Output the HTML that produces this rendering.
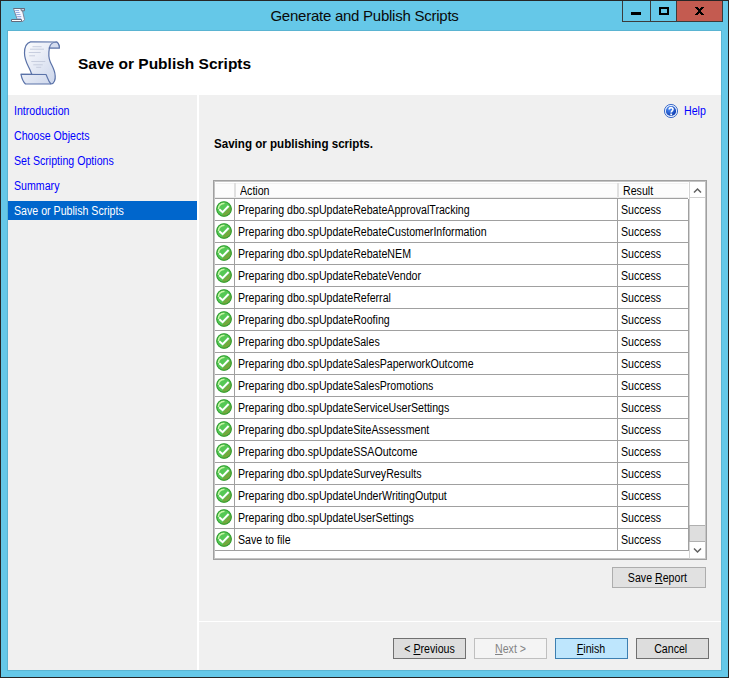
<!DOCTYPE html>
<html><head><meta charset="utf-8"><style>
*{margin:0;padding:0;box-sizing:border-box}
html,body{width:729px;height:678px;overflow:hidden;background:#262626}
body{position:relative;font-family:"Liberation Sans",sans-serif;font-size:12px;color:#000}
.a{position:absolute}
.t{position:absolute;line-height:14px;white-space:nowrap;transform-origin:0 0}
.nv{color:#0000ff}
.rw{left:215px;width:473px;height:22px;border-bottom:1px solid #a0a0a0;background:#fff}
.btn{position:absolute;height:21px;border:1px solid #707070;background:#dddddd;text-align:center;line-height:20px;white-space:nowrap}
.btn span{display:inline-block;transform-origin:50% 50%}
.b1{border-color:#adadad;background:#e1e1e1}
.b2{border-color:#bfbfbf;background:#f4f4f4;color:#838383}
.b3{border-color:#3c7fb1;background:#bee6fd}
u{text-decoration:underline;text-underline-offset:1px}
</style></head><body>
<svg width="0" height="0" style="position:absolute"><defs>
<radialGradient id="cg" cx="0.32" cy="0.3" r="0.75"><stop offset="0" stop-color="#c8f5a8"/><stop offset="0.5" stop-color="#5cc84a"/><stop offset="1" stop-color="#2f9a2f"/></radialGradient>
<clipPath id="cc"><circle cx="8" cy="8" r="7.5"/></clipPath>
<g id="chk"><circle cx="8" cy="8" r="7.5" fill="#55c855"/><path d="M3.5 16.5 L16.5 3.5 L16.5 16.5 Z" fill="#74a83e" clip-path="url(#cc)"/><path d="M2.3 8 C2.5 4.5 5 2.4 8.5 2.2" stroke="#c4f5a4" stroke-width="1.6" fill="none"/><circle cx="8" cy="8" r="7.3" fill="none" stroke="#33a033" stroke-width="1.1"/><path d="M3.3 8.3 L6.6 11.2 L12.6 5" fill="none" stroke="#fff" stroke-width="1.9"/></g>
<linearGradient id="sg" x1="0" y1="0" x2="1" y2="1"><stop offset="0" stop-color="#ffffff"/><stop offset="1" stop-color="#c9d3ea"/></linearGradient>
<radialGradient id="hg" cx="0.35" cy="0.3" r="0.8"><stop offset="0" stop-color="#4f8ff8"/><stop offset="1" stop-color="#0733a8"/></radialGradient>
</defs></svg>
<div class="a" style="left:1px;top:1px;width:727px;height:676px;background:#65c8e8"></div>
<div class="a" style="left:7px;top:30px;width:715px;height:641px;background:#5ab4d2"></div>
<div class="a" style="left:8px;top:31px;width:713px;height:639px;background:#f0f0f0"></div>

<svg class="a" style="left:0;top:0" width="30" height="26" viewBox="0 0 30 26"><path d="M13.5 8.5 L22 8.5 L24.5 19.5 L23 21.5 L17.5 19.8 C16 16 14.5 12 13.5 8.5 Z" fill="#f6f8ff" stroke="#7d8498" stroke-width="1"/><path d="M20.8 8.5 H24.5 V10.8 H21.4 Z" fill="#c9d1e6" stroke="#6a7182" stroke-width="1"/><path d="M13.5 8.5 H24.5" stroke="#646b7c" stroke-width="1"/><path d="M11.5 19.5 H21.5 V21.5 H11.5Z" fill="#ffffff" stroke="#646b7c" stroke-width="1"/><path d="M15.2 10.5H19M15.6 12.5H19.6M16.3 14.5H20.5M17.2 16.5H21.3M17.6 18.3H21.2" stroke="#8ea4de" stroke-width="0.9"/></svg>
<div class="a" style="left:0;top:6px;width:729px;text-align:center;font-size:15px;letter-spacing:-0.25px;color:#0a0a0a;line-height:20px">Generate and Publish Scripts</div>
<div class="a" style="left:622px;top:1px;width:101px;height:21px;background:#65c8e8;border:1px solid #3b3b3b;border-top:none"></div>
<div class="a" style="left:676px;top:1px;width:47px;height:21px;background:#c45b50;border:1px solid #3b3b3b;border-top:none"></div>
<div class="a" style="left:650px;top:1px;width:1px;height:20px;background:#3b3b3b"></div>
<div class="a" style="left:631px;top:12px;width:10px;height:3px;background:#000"></div>
<div class="a" style="left:659px;top:7px;width:10px;height:8px;border:2px solid #000"></div>
<svg class="a" style="left:695px;top:7px" width="9" height="8" viewBox="0 0 9 8" shape-rendering="crispEdges"><path d="M0 0h3v1h-3zM6 0h3v1h-3zM1 1h3v1h-3zM5 1h3v1h-3zM2 2h5v1h-5zM3 3h3v1h-3zM3 4h3v1h-3zM2 5h5v1h-5zM1 6h3v1h-3zM5 6h3v1h-3zM0 7h3v1h-3zM6 7h3v1h-3z" fill="#000"/></svg>

<div class="a" style="left:8px;top:31px;width:713px;height:64px;background:#fff"></div>
<svg class="a" style="left:16px;top:39px" width="48" height="48" viewBox="0 0 48 48">
<path d="M14.5 2.8 C10 4 8.5 9 8.5 14 C8.5 22 12 26 14.5 32 C15 33.5 15.5 34.5 15.7 35 L5 35.3 C5.5 38 7.5 43 9.5 45 L35 45 C38.5 44.5 39.5 40 39.2 37 C39 31 36 27 34.3 23 C33 20 32.5 14 33.4 8.8 L43.3 9 C43.5 6.5 42 3.5 40.8 3 Z" fill="url(#sg)" stroke="#5a72a8" stroke-width="1.2"/>
<path d="M33.4 8.8 C34 5 37.5 3 40.8 3 C42 3.5 43.5 6.5 43.3 9 Z" fill="#d5ddef" stroke="#5a72a8" stroke-width="1.2"/>
<path d="M5 35.3 L30 35.5 C31.5 38 32 42 35 45" fill="none" stroke="#5a72a8" stroke-width="1.2"/>
<path d="M16.5 7.7H25.6M14 10.2H28M12.8 13.5H24.7M13.2 16.8H19M15.3 22.5H29.3M17.3 25.8H26.8M20.2 28.3H25.2" stroke="#c3cadb" stroke-width="0.9"/>
</svg>
<div class="a" style="left:78px;top:54px;font-size:15.5px;font-weight:bold;letter-spacing:0px;line-height:20px;white-space:nowrap">Save or Publish Scripts</div>

<div class="a" style="left:197px;top:95px;width:2px;height:575px;background:#fff"></div>
<div class="a" style="left:199px;top:621px;width:522px;height:1px;background:#fff"></div>
<div class="t" style="left:14px;top:104px;color:#0000ff;transform:scaleX(0.885);">Introduction</div>
<div class="t" style="left:14px;top:129px;color:#0000ff;transform:scaleX(0.885);">Choose Objects</div>
<div class="t" style="left:14px;top:154px;color:#0000ff;transform:scaleX(0.885);">Set Scripting Options</div>
<div class="t" style="left:14px;top:179px;color:#0000ff;transform:scaleX(0.885);">Summary</div>
<div class="a" style="left:8px;top:201px;width:189px;height:19px;background:#0066cc"></div>
<div class="t" style="left:14px;top:204px;color:#fff;transform:scaleX(0.885);">Save or Publish Scripts</div>

<svg class="a" style="left:664px;top:104px" width="15" height="15" viewBox="0 0 15 15"><circle cx="7" cy="7" r="6.6" fill="#e4eefc" stroke="#2c5ec4" stroke-width="0.9"/><circle cx="7" cy="7" r="5.1" fill="url(#hg)"/><path d="M5.2 5.6 C5.2 3 9 3 9 5.3 C9 6.8 7.2 7 7.2 8.6" fill="none" stroke="#fff" stroke-width="1.6"/><rect x="6.3" y="9.6" width="1.8" height="1.7" fill="#fff"/></svg>
<div class="t" style="left:684px;top:104px;color:#0000ff;transform:scaleX(0.885);">Help</div>
<div class="t" style="left:214px;top:137px;font-weight:bold;transform:scaleX(0.965);">Saving or publishing scripts.</div>

<div class="a" style="left:213px;top:180px;width:494px;height:380px;border:1px solid #a0a0a0;background:#fff"></div>
<div class="a" style="left:214px;top:181px;width:492px;height:378px;border:1px solid #c4c4c4;background:#fff"></div>
<div class="a" style="left:215px;top:182px;width:473px;height:17px;background:#fcfcfc;border-top:1px solid #fff;border-bottom:1px solid #a0a0a0"></div>
<div class="a" style="left:216px;top:183px;width:472px;height:1px;background:#f2f2f2"></div>
<div class="a" style="left:215px;top:197px;width:473px;height:1px;background:#ebebeb"></div>
<div class="a" style="left:234px;top:183px;width:2px;height:14px;background:#e0e0e0"></div>
<div class="a" style="left:617px;top:183px;width:2px;height:14px;background:#e0e0e0"></div>
<div class="t" style="left:240px;top:184px;transform:scaleX(0.885);">Action</div>
<div class="t" style="left:623px;top:184px;transform:scaleX(0.885);">Result</div>
<div class="a rw" style="top:199px"></div>
<svg class="a" style="left:216px;top:201px" width="16" height="16"><use href="#chk"/></svg>
<div class="t" style="left:238px;top:203px;transform:scaleX(0.885);">Preparing dbo.spUpdateRebateApprovalTracking</div>
<div class="t" style="left:621px;top:203px;transform:scaleX(0.885);">Success</div>
<div class="a rw" style="top:221px"></div>
<svg class="a" style="left:216px;top:223px" width="16" height="16"><use href="#chk"/></svg>
<div class="t" style="left:238px;top:225px;transform:scaleX(0.885);">Preparing dbo.spUpdateRebateCustomerInformation</div>
<div class="t" style="left:621px;top:225px;transform:scaleX(0.885);">Success</div>
<div class="a rw" style="top:243px"></div>
<svg class="a" style="left:216px;top:245px" width="16" height="16"><use href="#chk"/></svg>
<div class="t" style="left:238px;top:247px;transform:scaleX(0.885);">Preparing dbo.spUpdateRebateNEM</div>
<div class="t" style="left:621px;top:247px;transform:scaleX(0.885);">Success</div>
<div class="a rw" style="top:265px"></div>
<svg class="a" style="left:216px;top:267px" width="16" height="16"><use href="#chk"/></svg>
<div class="t" style="left:238px;top:269px;transform:scaleX(0.885);">Preparing dbo.spUpdateRebateVendor</div>
<div class="t" style="left:621px;top:269px;transform:scaleX(0.885);">Success</div>
<div class="a rw" style="top:287px"></div>
<svg class="a" style="left:216px;top:289px" width="16" height="16"><use href="#chk"/></svg>
<div class="t" style="left:238px;top:291px;transform:scaleX(0.885);">Preparing dbo.spUpdateReferral</div>
<div class="t" style="left:621px;top:291px;transform:scaleX(0.885);">Success</div>
<div class="a rw" style="top:309px"></div>
<svg class="a" style="left:216px;top:311px" width="16" height="16"><use href="#chk"/></svg>
<div class="t" style="left:238px;top:313px;transform:scaleX(0.885);">Preparing dbo.spUpdateRoofing</div>
<div class="t" style="left:621px;top:313px;transform:scaleX(0.885);">Success</div>
<div class="a rw" style="top:331px"></div>
<svg class="a" style="left:216px;top:333px" width="16" height="16"><use href="#chk"/></svg>
<div class="t" style="left:238px;top:335px;transform:scaleX(0.885);">Preparing dbo.spUpdateSales</div>
<div class="t" style="left:621px;top:335px;transform:scaleX(0.885);">Success</div>
<div class="a rw" style="top:353px"></div>
<svg class="a" style="left:216px;top:355px" width="16" height="16"><use href="#chk"/></svg>
<div class="t" style="left:238px;top:357px;transform:scaleX(0.885);">Preparing dbo.spUpdateSalesPaperworkOutcome</div>
<div class="t" style="left:621px;top:357px;transform:scaleX(0.885);">Success</div>
<div class="a rw" style="top:375px"></div>
<svg class="a" style="left:216px;top:377px" width="16" height="16"><use href="#chk"/></svg>
<div class="t" style="left:238px;top:379px;transform:scaleX(0.885);">Preparing dbo.spUpdateSalesPromotions</div>
<div class="t" style="left:621px;top:379px;transform:scaleX(0.885);">Success</div>
<div class="a rw" style="top:397px"></div>
<svg class="a" style="left:216px;top:399px" width="16" height="16"><use href="#chk"/></svg>
<div class="t" style="left:238px;top:401px;transform:scaleX(0.885);">Preparing dbo.spUpdateServiceUserSettings</div>
<div class="t" style="left:621px;top:401px;transform:scaleX(0.885);">Success</div>
<div class="a rw" style="top:419px"></div>
<svg class="a" style="left:216px;top:421px" width="16" height="16"><use href="#chk"/></svg>
<div class="t" style="left:238px;top:423px;transform:scaleX(0.885);">Preparing dbo.spUpdateSiteAssessment</div>
<div class="t" style="left:621px;top:423px;transform:scaleX(0.885);">Success</div>
<div class="a rw" style="top:441px"></div>
<svg class="a" style="left:216px;top:443px" width="16" height="16"><use href="#chk"/></svg>
<div class="t" style="left:238px;top:445px;transform:scaleX(0.885);">Preparing dbo.spUpdateSSAOutcome</div>
<div class="t" style="left:621px;top:445px;transform:scaleX(0.885);">Success</div>
<div class="a rw" style="top:463px"></div>
<svg class="a" style="left:216px;top:465px" width="16" height="16"><use href="#chk"/></svg>
<div class="t" style="left:238px;top:467px;transform:scaleX(0.885);">Preparing dbo.spUpdateSurveyResults</div>
<div class="t" style="left:621px;top:467px;transform:scaleX(0.885);">Success</div>
<div class="a rw" style="top:485px"></div>
<svg class="a" style="left:216px;top:487px" width="16" height="16"><use href="#chk"/></svg>
<div class="t" style="left:238px;top:489px;transform:scaleX(0.885);">Preparing dbo.spUpdateUnderWritingOutput</div>
<div class="t" style="left:621px;top:489px;transform:scaleX(0.885);">Success</div>
<div class="a rw" style="top:507px"></div>
<svg class="a" style="left:216px;top:509px" width="16" height="16"><use href="#chk"/></svg>
<div class="t" style="left:238px;top:511px;transform:scaleX(0.885);">Preparing dbo.spUpdateUserSettings</div>
<div class="t" style="left:621px;top:511px;transform:scaleX(0.885);">Success</div>
<div class="a rw" style="top:529px"></div>
<svg class="a" style="left:216px;top:531px" width="16" height="16"><use href="#chk"/></svg>
<div class="t" style="left:238px;top:533px;transform:scaleX(0.885);">Save to file</div>
<div class="t" style="left:621px;top:533px;transform:scaleX(0.885);">Success</div>
<div class="a" style="left:234px;top:199px;width:1px;height:352px;background:#a0a0a0"></div>
<div class="a" style="left:617px;top:199px;width:1px;height:352px;background:#a0a0a0"></div>
<div class="a" style="left:688px;top:199px;width:1px;height:352px;background:#a0a0a0"></div>
<div class="a" style="left:689px;top:182px;width:1px;height:376px;background:#d4d4d4"></div>
<svg class="a" style="left:693px;top:187px" width="9" height="7"><path d="M1 5.5 L4.5 2 L8 5.5" fill="none" stroke="#606060" stroke-width="1.5"/></svg>
<div class="a" style="left:689px;top:197px;width:16px;height:1px;background:#d0d0d0"></div>
<div class="a" style="left:689px;top:525px;width:16px;height:17px;background:#dedede;border:1px solid #b0b0b0;border-right:none"></div>
<div class="a" style="left:689px;top:558px;width:16px;height:1px;background:#d0d0d0"></div>
<svg class="a" style="left:693px;top:547px" width="9" height="7"><path d="M1 1.5 L4.5 5 L8 1.5" fill="none" stroke="#606060" stroke-width="1.5"/></svg>

<div class="btn b1" style="left:612px;top:567px;width:94px;padding-right:3px"><span style="transform:scaleX(0.885)">Save <u>R</u>eport</span></div>
<div class="btn " style="left:393px;top:638px;width:73px;padding-right:0px"><span style="transform:scaleX(0.885)">&lt; <u>P</u>revious</span></div>
<div class="btn b2" style="left:474px;top:638px;width:73px;padding-right:0px"><span style="transform:scaleX(0.885)"><u>N</u>ext &gt;</span></div>
<div class="btn b3" style="left:555px;top:638px;width:73px;padding-right:0px"><span style="transform:scaleX(0.885)"><u>F</u>inish</span></div>
<div class="btn " style="left:636px;top:638px;width:73px;padding-right:3px"><span style="transform:scaleX(0.885)">Cancel</span></div>
</body></html>
